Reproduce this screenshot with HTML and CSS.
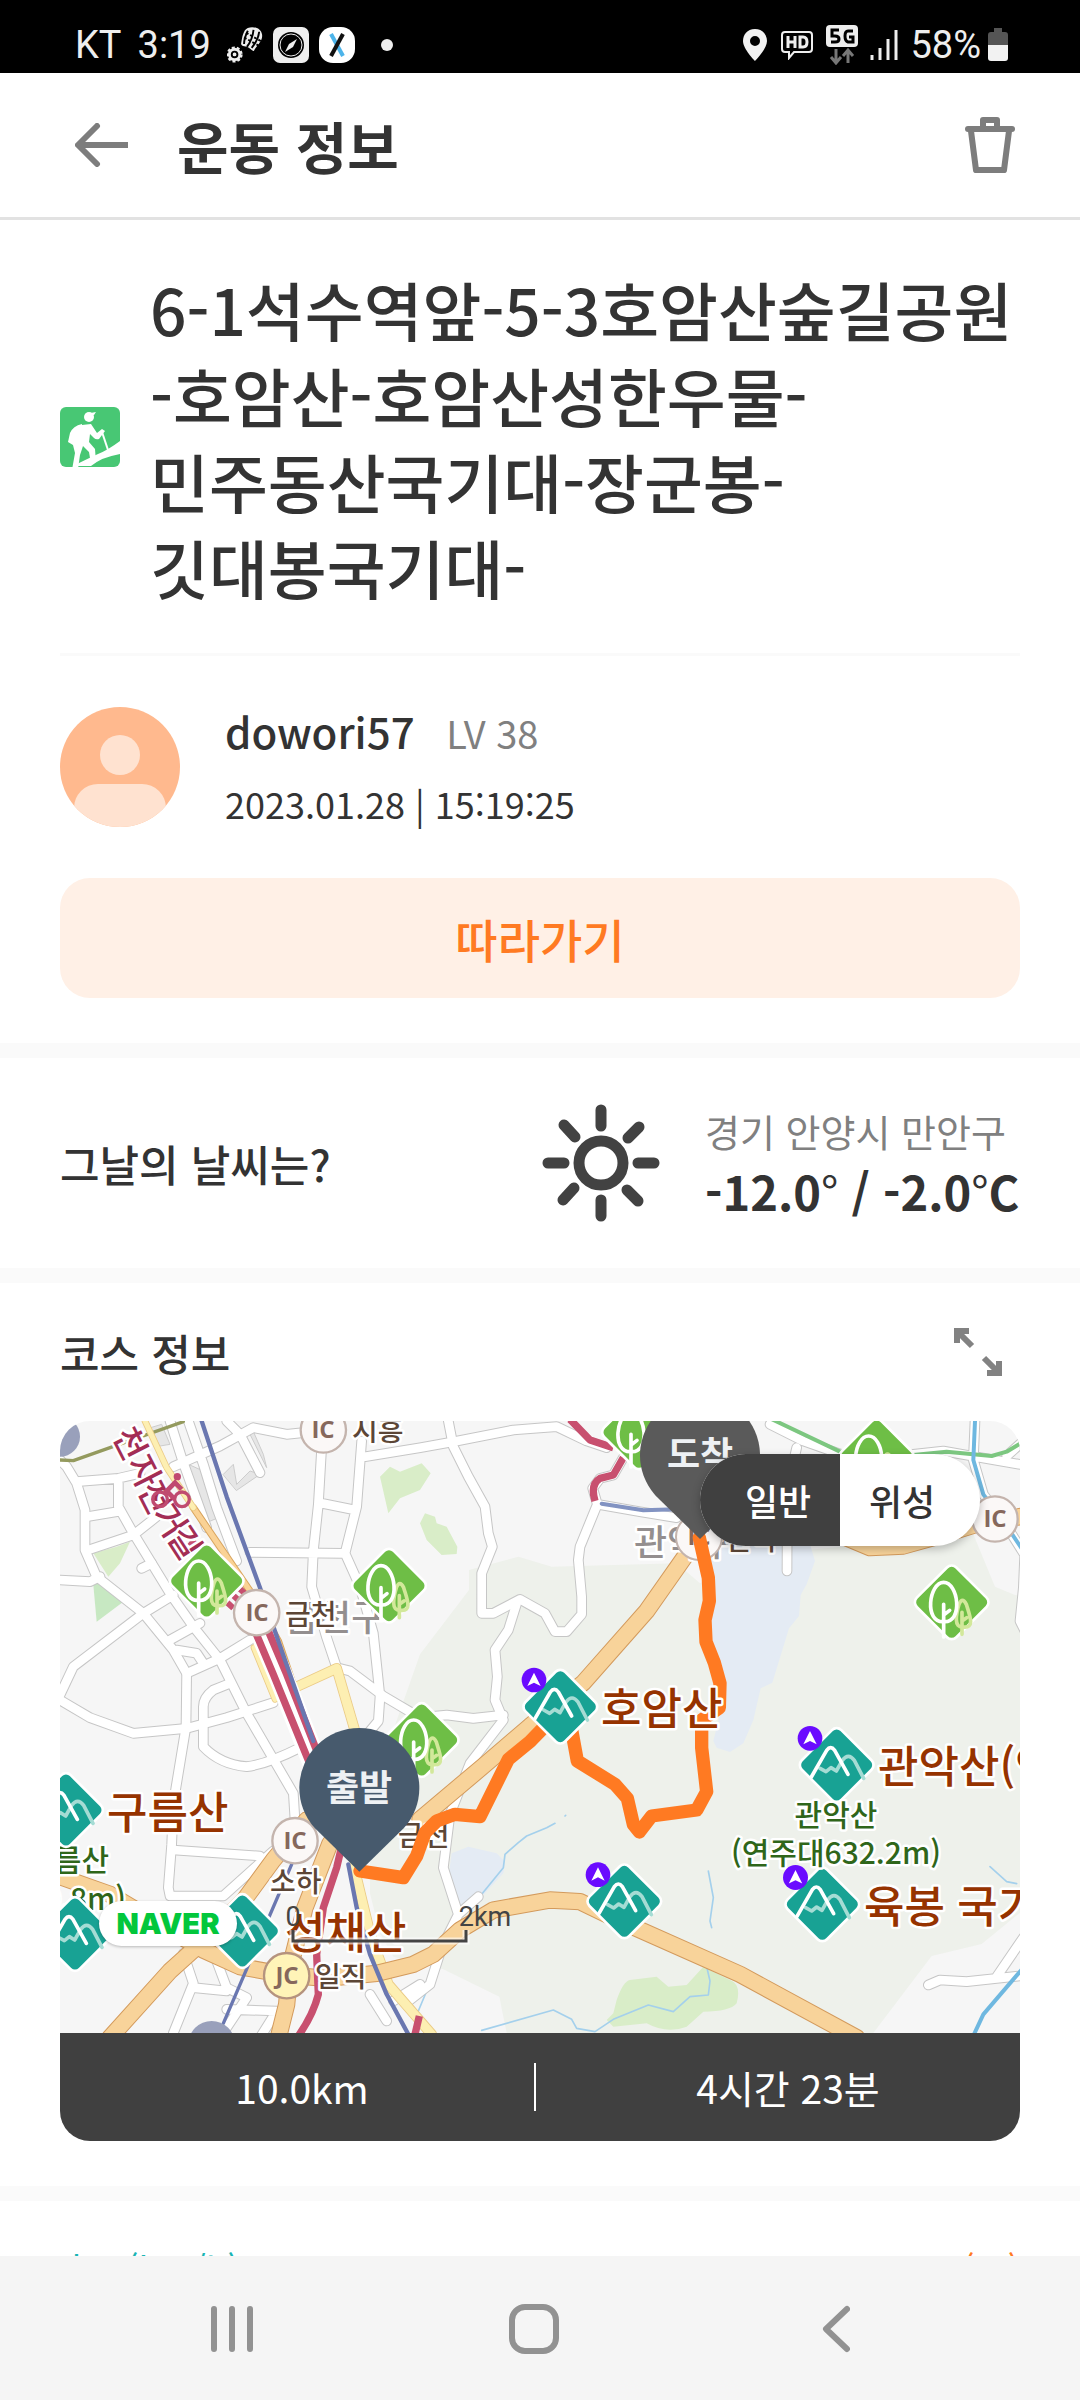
FILE: index.html
```html
<!DOCTYPE html>
<html lang="ko">
<head>
<meta charset="utf-8">
<meta name="viewport" content="width=device-width, initial-scale=1">
<title>운동 정보</title>
<link rel="stylesheet" href="styles.css">
</head>
<body>
<div class="statusbar">
  <div class="status-left">
    <span>KT</span>
    <span class="clock">3:19</span>
    <svg class="st-foot" width="36" height="36" viewBox="0 0 38 38"><g fill="#eee"><path d="M22 1c6-2 14 0 15 7 1 6-4 10-8 16-1 3-3 0-6-2-2-2-9-1-8-5 1-6 2-14 7-16z"/><circle cx="8" cy="29" r="7"/></g><g stroke="#000" stroke-width="2" fill="none"><path d="M22 4q-4 8-4 14M28 3q-1 10-7 18M34 5q-1 9-8 17"/><path stroke-dasharray="3 2" d="M18 11l16 9M20 6l16 9"/><circle cx="8" cy="29" r="3"/></g><circle cx="8" cy="29" r="7" fill="none" stroke="#eee" stroke-width="3" stroke-dasharray="3 2"/></svg>
    <svg class="st-compass" width="36" height="36" viewBox="0 0 36 36"><rect width="36" height="36" rx="7" fill="#eee"/><circle cx="18" cy="18" r="13" fill="#000"/><circle cx="18" cy="18" r="11" fill="none" stroke="#eee"/><path fill="#eee" d="M24 12l-4 8-8 5 4-8z"/></svg>
    <svg class="st-x" width="36" height="36" viewBox="0 0 36 36"><rect width="36" height="36" rx="14" fill="#fff"/><path d="M12 7l12 22" stroke="#4db4ea" stroke-width="4"/><path d="M24 7L12 29" stroke="#111" stroke-width="4"/></svg>
    <i class="dot"></i>
  </div>
  <div class="status-right">
    <svg width="26" height="32" viewBox="0 0 26 32"><path fill="#f2f2f2" fill-rule="evenodd" d="M13 0C5 0 1 6 1 12c0 8 12 20 12 20s12-12 12-20C25 6 21 0 13 0zm0 7a5 5 0 1 1 0 10 5 5 0 0 1 0-10z"/></svg>
    <svg width="34" height="30" viewBox="0 0 34 30" fill="none" stroke="#eee"><path stroke-width="2" d="M5 2h24q3 0 3 3v14q0 3-3 3H14l-5 6v-6H5q-3 0-3-3V5q0-3 3-3z"/><path stroke-width="3" d="M8 6v12M15 6v12M8 12h7M20 7v10h3q4 0 4-5t-4-5z"/></svg>
    <svg width="32" height="40" viewBox="0 0 32 40"><rect width="32" height="22" rx="4" fill="#eee"/><path fill="none" stroke="#000" stroke-width="3" d="M13 5H6v6h3q4 0 4 3t-4 3H5M27 6h-5q-3 0-3 5t3 6h5v-5h-4"/><path fill="none" stroke="#777" stroke-width="3" d="M10 24v13M5 32l5 6 5-6M22 38V25M17 31l5-6 5 6"/></svg>
    <svg width="28" height="32" viewBox="0 0 28 32" stroke="#eee" stroke-width="3"><path d="M2 26v5M10 19v12M18 10v21M26 1v30"/></svg>
    <span class="percent">58%</span>
    <svg class="st-batt" width="22" height="34" viewBox="0 0 22 34"><path fill="#555" d="M7 0h8v4h3q3 0 3 3v11H1V7q0-3 3-3h3z"/><path fill="#f2f2f2" d="M1 17h20v13q0 3-3 3H4q-3 0-3-3z"/></svg>
  </div>
</div>

<header class="appbar">
  <button class="icon-btn" aria-label="뒤로"><svg width="54" height="44" viewBox="0 0 54 44" fill="none" stroke="#7d7d7d" stroke-width="6" stroke-linecap="round" stroke-linejoin="round"><path d="M22 3L3 22l19 19"/><path stroke-linecap="butt" d="M4 22h49"/></svg></button>
  <h1>운동 정보</h1>
  <button class="icon-btn" aria-label="삭제"><svg width="52" height="58" viewBox="0 0 52 58" fill="none" stroke="#7d7d7d" stroke-width="6"><path stroke-linecap="round" d="M4 13h44"/><path stroke-linejoin="round" d="M19 11V4h14v7M7 15l5 39h28l5-39"/></svg></button>
</header>

<main class="content">
  <section class="activity">
    <div class="activity-title">
      <svg class="hike" width="60" height="60" viewBox="0 0 60 60"><rect width="60" height="60" rx="6" fill="#48c774"/><g fill="#fff"><circle cx="29" cy="10" r="5"/><path d="M25 7l11-2-2 3z"/><path d="M22 18l9-1 6 9 5-4 3 2-6 8q-3 1-5-1l-4-4-1 8 6 7 1 13-5 2-2-12-6-6-3 9-2 14-6 1 3-17-2-8-5-3 2-9q3-7 12-9z"/><path d="M13 59q14-7 25-12 10-4 22-13v13q-18 3-29 12z"/></g><path d="M42 25l7 21" stroke="#fff" stroke-width="2"/></svg>
      <h2><span>6-1석수역앞-5-3호암산숲길공원</span><span>-호암산-호암산성한우물-</span><span>민주동산국기대-장군봉-</span><span>깃대봉국기대-</span></h2>
    </div>
    <div class="profile">
      <svg width="120" height="120" viewBox="0 0 120 120"><defs><clipPath id="av"><circle cx="60" cy="60" r="60"/></clipPath></defs><g clip-path="url(#av)"><path fill="#ffb98e" d="M0 0h120v120H0z"/><g fill="#ffe2d0"><circle cx="60" cy="48" r="20"/><rect x="14" y="77" width="92" height="60" rx="24"/></g></g></svg>
      <div class="who">
        <p class="name">dowori57 <span class="level">LV 38</span></p>
        <p class="date">2023.01.28 | 15:19:25</p>
      </div>
    </div>
    <button class="follow">따라가기</button>
  </section>

  <section class="weather">
    <h3>그날의 날씨는?</h3>
    <svg width="118" height="118" viewBox="0 0 118 118" fill="none" stroke="#424242" stroke-width="11" stroke-linecap="round"><circle cx="59" cy="59" r="22"/><path d="M59 6v16M59 96v16M6 59h16M96 59h16M22 21l11 12M97 23L86 34M21 96l11-12M96 97L85 86"/></svg>
    <div class="weather-data">
      <p class="place">경기 안양시 만안구</p>
      <p class="temp">-12.0<span class="deg">°</span> / -2.0<span class="deg">°</span>C</p>
    </div>
  </section>

  <section class="course">
    <div class="course-head">
      <h3>코스 정보</h3>
      <button class="icon-btn" aria-label="지도 확대"><svg width="50" height="50" viewBox="0 0 50 50" fill="none" stroke="#828282" stroke-width="6"><path d="M19 19L4 4M4 16V4h12M31 31l15 15M46 34v12H34"/></svg></button>
    </div>
    <div class="card">
      <div class="map">
        <svg class="map-canvas" viewBox="0 0 960 612" role="img" aria-label="코스 지도">
          <defs>
            <symbol id="tree" viewBox="-120 -120 240 240" overflow="visible"><rect x="-84" y="-84" width="168" height="168" rx="20" transform="rotate(45)" fill="#6ebe46" stroke="#fff" stroke-width="8"/><g fill="none" stroke-width="11" stroke-linecap="round"><path stroke="#d2e89a" d="M36 74C4 78 14 34 22 6q10-24 22 0c8 28 28 72-8 68M31 30v66M31 56l14-10"/><path stroke="#fff" fill="#6ebe46" d="M-24 58C-84 62-68-60-24-60S36 62-24 58z"/><path stroke="#fff" d="M-24 6v98M-24 38l18-14"/></g></symbol>
            <symbol id="mount" viewBox="-120 -120 240 240" overflow="visible"><rect x="-84" y="-84" width="168" height="168" rx="20" transform="rotate(45)" fill="#18a294" stroke="#fff" stroke-width="8"/><g fill="none" stroke-width="11" stroke-linecap="round" stroke-linejoin="round"><path stroke="#a5dcd4" d="M-50 10l18 10 15-12 16 10 18-32q18-24 36 0l28 54"/><path stroke="#fff" d="M-76 36l46-80q12-16 24 0L34 28"/></g></symbol>
            <symbol id="nav" viewBox="-40 -40 80 80" overflow="visible"><circle r="37" fill="#6a0bff"/><path fill="#fff" d="M0-22l20 40L0 8l-20 10z"/></symbol>
            <g id="roads" fill="none">
              <path d="M0 117L20 137 50 187 75 267V387L110 467 250 577 340 687 380 757 378 917 340 1147 335 1270 325 1400 330 1425H490L640 1290"/>
              <path d="M50 182L175 172 240 157M175 187V257L220 337 330 517 400 617 480 717 560 877 620 980 700 1117 705 1197M80 287L170 272M85 387L220 342 290 287M0 477L90 482 120 467M0 822L40 737 250 577 340 522M330 657L420 607M380 757L480 712 570 657"/>
              <path d="M0 837L90 890 220 937 380 922 500 890 640 845M510 787L460 807Q430 830 430 857V977Q480 1030 560 1037 620 1030 720 980M350 687L410 697 430 727M245 442L275 427"/>
              <path d="M330 0L368 120 440 320M385 0L430 130 470 260 530 420M340 137L480 75 580 20 680 40 730 35M540 40L600 155M500 0L540 40"/>
              <path d="M785 80L775 250 760 390 755 497 800 650 830 740 870 750 970 825 1080 890 1160 882 1240 892 1330 882M905 60L890 257 855 397 900 497 940 637 960 827 955 900 930 930M785 247L885 267M570 394L850 397M915 107L1080 80 1180 62 1360 27 1490 17 1580 60 1640 80"/>
              <path d="M1165 0L1180 77 1225 167 1275 257 1285 337 1297 377 1265 457V577H1300L1380 535 1455 577 1485 632H1520L1565 580V527L1555 417 1560 377 1612 250 1740 272 1850 290M1612 250L1598 202 1620 172 1660 162 1690 110"/>
              <path d="M1370 547L1345 627 1305 687 1312 767 1305 837 1330 897 1230 1027 1170 1180 1150 1340 1195 1480 1145 1580 1110 1690 1040 1745M1195 1480L1255 1427"/>
              <path d="M340 1287L600 1305M370 1597L400 1687 340 1836M400 1700L500 1710M470 1620L500 1700 560 1730 480 1850M500 1765L650 1770 600 1850M930 1720L980 1800M1000 1740L1080 1690"/>
              <path d="M2130 10L2230 60 2400 120M2210 80L2182 200 2181 450M2560 100L2650 90 2790 115 2890 132M2840 105L2890 60M2745 0L2740 117 2770 220 2830 300 2890 395M2895 380L2890 500 2880 600 2900 640M2605 1692L2640 1677 2720 1682 2880 1665M2810 1667L2890 1550"/>
            </g>
            <g id="highways" fill="none">
              <path d="M1890 385L1760 570 1570 785 1410 915 1270 1035 1080 1195"/>
              <path d="M740 1197L640 1317 550 1440 400 1587 330 1650 150 1850M810 1267L735 1460 690 1640 680 1750 655 1850"/>
              <path d="M0 1367L150 1420 430 1587 540 1637 680 1662 800 1672 950 1657 1060 1630 1120 1600 1200 1527 1300 1467 1470 1437 1560 1442 1680 1500 2040 1660 2390 1850M2310 330L2430 380 2530 375 2620 350 2750 310 2890 285"/>
            </g>
          </defs>
          <rect width="960" height="612" fill="#f6f6f6"/>
          <g transform="scale(0.333333)" stroke-linecap="round" stroke-linejoin="round">
            <path fill="#eef1eb" d="M1227 447L1375 407 1475 437 1850 427 1920 487 2100 400 2740 340 2805 497 2865 522 2890 525V1467L2765 1569 2615 1605 2440 1836H1340L1318 1727 1150 1645 1000 1607 960 1537 930 1417V1250L1000 927 1080 700 1227 507z"/>
            <path fill="#e4ebf4" d="M1935 430L1960 370H2250L2265 420 2240 490 2222 522 2217 585 2187 622 2137 785 2102 802 2080 897 2050 967 2010 993 1970 980 1960 960 1975 900 1990 830 1940 640zM1175 1297L1225 1277 1310 1297 1335 1322 1330 1357 1265 1427 1200 1467 1165 1370z"/>
            <path fill="#d9edc8" d="M960 167L990 137 1020 152 1085 127 1112 157 1080 207 1020 232 985 277zM1080 307L1095 277 1125 287 1130 307 1160 317 1192 377 1190 399 1145 402 1100 357zM100 397L170 377 210 362 180 427 145 467zM1640 1797L1660 1777 1670 1737Q1690 1680 1710 1677L1790 1667 1825 1697 1880 1692 1930 1637 2010 1677Q2045 1690 2030 1747 2010 1772 1930 1772L1880 1817Q1820 1840 1760 1807L1660 1817z"/>
            <path fill="#c7e8c2" d="M100 492L130 482 190 542 110 602z"/>
            <path fill="#e6e6e6" stroke="#ccc" stroke-width="3" d="M272 20L305 10 330 70 300 75zM385 130L430 150 475 290 440 305zM490 160L520 130 530 190 570 150 600 160 530 208zM560 20L620 140 610 100 575 20z"/>
            <g fill="none" stroke="#a4d0ec" stroke-width="5"><path d="M1265 1420L1330 1340 1335 1300 1375 1265 1400 1245 1460 1220 1485 1207M1515 1185l2-2M1265 1828L1480 1767 1535 1795 1550 1822 1605 1832 1660 1795 1765 1752 1840 1772 1890 1727 1945 1722 1950 1680 1940 1637M1945 1350L1960 1430 1950 1500 1955 1520M2790 1337L2840 1382 2870 1388M1075 1770L1100 1710"/></g>
            <use href="#roads" stroke="#c6c6c6" stroke-width="32"/>
            <use href="#roads" stroke="#fff" stroke-width="26"/>
            <path fill="none" stroke="#949a5e" stroke-width="10" d="M0 117L40 119 370 2"/>
            <g fill="none"><path stroke="#d9a55e" stroke-width="22" d="M400 260L570 510 655 660 750 940"/><path stroke="#fad295" stroke-width="16" d="M400 260L570 510 655 660 750 940"/>
            <g stroke="#ebcb86" stroke-width="32"><path d="M715 795L830 742 885 930V1350L930 1537 985 1690 1115 1840"/><path stroke-width="20" d="M255 0L320 140 400 260M582 680L645 835"/></g><g stroke="#fdefb2" stroke-width="27"><path d="M715 795L830 742 885 930V1350L930 1537 985 1690 1115 1840"/><path stroke-width="15" d="M255 0L320 140 400 260M582 680L645 835"/></g></g>
            <use href="#highways" stroke="#d39a5c" stroke-width="52"/>
            <use href="#highways" stroke="#f8d39a" stroke-width="46"/>
            <g fill="none">
              <path stroke="#fff" stroke-width="74" d="M605 630L660 760 770 1040"/>
              <path stroke="#c8506f" stroke-width="22" stroke-linecap="butt" d="M585 630L640 760 750 1030M625 630L680 760 790 1040M843 1285L830 1340 790 1460 770 1600 775 1720Q760 1780 715 1845M1530 -5L1590 57 1660 80M1690 110L1660 162 1620 172Q1590 190 1605 240M1065 1840L1078 1785"/>
              <path stroke="#c8506f" stroke-width="24" stroke-linecap="butt" stroke-dasharray="18 10" d="M390 360L440 400M505 560L560 500"/>
              <path stroke="#6a77b0" stroke-width="13" d="M425 0L500 227 600 500 655 660 760 960M865 1330L890 1460 930 1600 980 1720 1045 1840"/>
              <path stroke="#6a77b0" stroke-width="10" d="M695 1330L490 1807"/>
              <path stroke="#8293c2" stroke-width="12" d="M1625 248L1750 268 1850 265"/>
              <path stroke="#7cc780" stroke-width="12" d="M2130 -8L2340 92 2560 102 2660 92 2795 105 2840 92 2890 62"/>
              <path stroke="#6fb8e0" stroke-width="12" d="M2745 0L2740 117 2770 220 2830 300 2890 390M2742 1840L2770 1780 2890 1640"/>
            </g>
            <circle cx="0" cy="47" r="60" fill="#99a0bb"/><circle cx="455" cy="1870" r="70" fill="#99a0bb"/>
            <g fill="#fbf8f7" stroke="#c4b4ad" stroke-width="7"><circle cx="790" cy="27" r="68"/><circle cx="590" cy="575" r="68"/><circle cx="705" cy="1259" r="68"/><circle cx="2805" cy="294" r="68"/><circle cx="680" cy="1664" r="68" fill="#fff4b8" stroke="#b5937e"/></g>
          </g>
          <g class="map-text">
            <g class="ghost"><text x="225" y="210">금천구</text><text x="574" y="135">관악구</text></g>
          </g>
          <circle cx="639" cy="116" r="23" fill="#fbf8f7" stroke="#c4b4ad" stroke-width="2"/>
          <g class="map-text">
            <text x="292" y="20" class="road">시흥</text>
            <text x="225" y="204" class="road">금천</text>
            <text x="338" y="425" class="road">금천</text>
            <text x="210" y="471" class="road">소하</text>
            <text x="255" y="566" class="road">일직</text>
            <text x="666" y="129" class="road">관악</text>
            <g class="bike"><text transform="translate(52 14) rotate(63)">천</text><text transform="translate(66 42) rotate(63)">자</text><text transform="translate(77 68) rotate(63)">전</text><text transform="translate(91 93) rotate(57)">거</text><text transform="translate(106 115) rotate(57)">길</text></g>
            <g class="icl"><text x="263" y="17">IC</text><text x="197" y="200">IC</text><text x="235" y="428">IC</text><text x="639" y="124">IC</text><text x="935" y="106">IC</text><text x="227" y="563">JC</text></g>
            <g class="green"><text x="49" y="450" text-anchor="end">구름산</text><text x="66" y="489" text-anchor="end">(240.8m)</text></g>
          </g>
          <g transform="scale(0.333333)"><g fill="none" stroke="#c04a70" stroke-width="10"><circle cx="300" cy="235" r="22"/><circle cx="366" cy="235" r="22"/><path stroke-width="14" d="M345 235L320 210 345 185 365 205"/></g><circle cx="352" cy="167" r="11" fill="#c04a70"/></g>
          <path transform="scale(0.333333)" fill="none" stroke="#ff7a22" stroke-width="40" stroke-linejoin="round" stroke-linecap="round" d="M900 1350L1030 1370 1070 1305 1095 1235 1130 1200 1185 1180 1260 1187 1345 1015 1410 962 1470 900 1530 900 1552 1020 1665 1090 1702 1132 1720 1210 1738 1233 1775 1185 1910 1167 1940 1112 1925 980V897L1978 860 1980 787 1963 725 1938 662 1935 597 1948 540 1945 470 1918 350"/>
          <g transform="scale(0.333333)">
            <g id="trees"><use href="#tree" x="320" y="360" width="240" height="240"/><use href="#tree" x="867" y="374" width="240" height="240"/><use href="#tree" x="965" y="837" width="240" height="240"/><use href="#tree" x="1617" y="-86" width="240" height="240"/><use href="#tree" x="2330" y="-15" width="240" height="240"/><use href="#tree" x="2555" y="424" width="240" height="240"/></g>
            <g id="mountains"><use href="#mount" x="-102" y="1047" width="240" height="240"/><use href="#mount" x="-75" y="1419" width="240" height="240"/><use href="#mount" x="427" y="1410" width="240" height="240"/><use href="#mount" x="1381" y="737" width="240" height="240"/><use href="#mount" x="1573" y="1321" width="240" height="240"/><use href="#mount" x="2210" y="912" width="240" height="240"/><use href="#mount" x="2167" y="1330" width="240" height="240"/></g>
            <g><use href="#nav" x="1382" y="737" width="80" height="80"/><use href="#nav" x="1574" y="1321" width="80" height="80"/><use href="#nav" x="2210" y="912" width="80" height="80"/></g>
          </g>
          <g class="map-text">
            <g class="green"><text x="776" y="405" text-anchor="middle">관악산</text><text x="776" y="443" text-anchor="middle">(연주대632.2m)</text></g>
            <g class="peak"><text x="47" y="408">구름산</text><text x="541" y="304">호암산</text><text x="818" y="362">관악산(연주대)</text><text x="804" y="502">육봉 국기봉</text><text x="225" y="528">성채산</text></g>
          </g>
          <use href="#nav" x="722" y="443" width="27" height="27"/>
          <g transform="scale(0.333333)">
            <path fill="#475a6d" d="M898 1352L765 1222A180 180 0 1 1 1031 1222z"/>
            <path fill="#5a5a5a" d="M1920 354L1787 224A180 180 0 1 1 2053 224z"/>
          </g>
          <g class="pins"><text x="299" y="380">출발</text><text x="640" y="47">도착</text></g>
          <path d="M233 509v11h173v-11" fill="none" stroke="#fff" stroke-width="7" opacity=".6"/>
          <path d="M233 509v11h173v-11" fill="none" stroke="#444" stroke-width="3"/>
          <g class="scale"><text x="233" y="505" text-anchor="middle">0</text><text x="425" y="505" text-anchor="middle">2km</text></g>
        </svg>
        <span class="naver">NAVER</span>
        <div class="toggle"><button class="on">일반</button><button>위성</button></div>
      </div>
      <dl class="stats"><dd>10.0km</dd><dd>4시간 23분</dd></dl>
    </div>
  </section>

  <section class="chart">
    <span class="speed">속도(km/h)</span><span class="alt">고도(m)</span>
  </section>
</main>

<nav class="navbar">
  <button aria-label="최근 앱"><svg width="44" height="48" viewBox="0 0 44 48" stroke="#929292" stroke-width="6" stroke-linecap="round"><path d="M4 4v40M22 4v40M40 4v40"/></svg></button>
  <button aria-label="홈"><svg width="50" height="50" viewBox="0 0 50 50"><rect x="3" y="3" width="44" height="44" rx="13" fill="none" stroke="#929292" stroke-width="6"/></svg></button>
  <button aria-label="뒤로 가기"><svg width="28" height="48" viewBox="0 0 28 48" fill="none" stroke="#929292" stroke-width="6" stroke-linecap="round" stroke-linejoin="round"><path d="M25 4L4 24l21 20"/></svg></button>
</nav>
</body>
</html>
```
FILE: styles.css
```css
* { box-sizing: border-box; }
body {
  margin: 0;
  height: 100vh;
  display: flex;
  flex-direction: column;
  background: #fff;
  color: #333;
  font-family: "Noto Sans CJK KR", sans-serif;
}
h1, h2, h3, p, dl, dd { margin: 0; font-weight: 500; }
button { border: 0; padding: 0; background: none; font: inherit; color: inherit; }
svg { display: block; flex: none; }

.statusbar {
  flex: none;
  height: 73px;
  padding: 16px 71px 0 75px;
  display: flex;
  justify-content: space-between;
  background: #000;
  color: #eee;
  font: 38px/58px Roboto, sans-serif;
}
.status-left, .status-right { display: flex; align-items: center; }
.status-left { gap: 10px; }
.clock { margin-left: 6px; margin-right: 6px; }
.dot { width: 12px; height: 12px; margin-left: 16px; border-radius: 50%; background: #eee; }
.status-right { gap: 12px; }
.st-batt { margin-left: -6px; }

.appbar {
  flex: none;
  height: 147px;
  padding: 0 64px 0 75px;
  display: flex;
  align-items: center;
  border-bottom: 3px solid #e2e2e2;
}
.appbar h1 { flex: 1; margin-left: 48px; font-size: 56px; font-weight: 700; line-height: 76px; }

.content { flex: 1; min-height: 0; overflow-y: auto; scrollbar-width: none; }
.content section { padding: 45px 60px; border-bottom: 15px solid #fafafa; }

.activity-title {
  display: flex;
  align-items: center;
  gap: 30px;
  padding-bottom: 44px;
  border-bottom: 3px solid #fafafa;
}
.activity-title h2 { font-size: 64px; line-height: 86px; white-space: nowrap; }
.activity-title span { display: block; }

.profile { display: flex; align-items: center; gap: 45px; padding: 40px 0; }
.name { font-size: 42px; line-height: 70px; }
.level { margin-left: 20px; font-size: 38px; font-weight: 400; color: #808080; }
.date { font-size: 36px; font-weight: 400; line-height: 70px; }
.follow {
  display: block;
  width: 100%;
  height: 120px;
  border-radius: 30px;
  background: #fff0e6;
  color: #ff7a22;
  font-size: 46px;
  font-weight: 500;
}

h3 { font-size: 43px; line-height: 60px; }
.content .weather { display: flex; align-items: center; height: 225px; padding-top: 0; padding-bottom: 0; }
.weather h3 { flex: 1; }
.weather-data { width: 315px; margin-left: 45px; white-space: nowrap; }
.place { font-size: 38px; font-weight: 400; line-height: 56px; color: #808080; }
.temp { font-size: 47px; line-height: 64px; font-weight: 700; }
.deg { font-weight: 400; }

.course-head { display: flex; justify-content: space-between; align-items: center; height: 48px; margin: 0 17px 45px 0; }
.card { overflow: hidden; border-radius: 30px; }
.map { position: relative; }
.map-canvas { width: 100%; height: auto; }
.map-text text { paint-order: stroke; stroke: #fff; stroke-width: 5px; stroke-linejoin: round; }
.map-text, .pins { font-family: "Noto Sans CJK KR", sans-serif; font-weight: 500; }
.road { font-size: 28px; fill: #5c4636; }
.ghost { font-size: 36px; fill: #948f8f; }
.bike { font-size: 34px; fill: #a32d55; }
.map-text .icl { font-family: "Open Sans", sans-serif; font-size: 24px; font-weight: 700; fill: #86685c; text-anchor: middle; }
.map-text .icl text { stroke: none; }
.green { font-size: 30px; fill: #2f661a; }
.peak { font-size: 44px; fill: #963300; }
.pins { font-size: 36px; fill: #eef1f4; font-weight: 700; text-anchor: middle; }
.scale { font: 27px Roboto, sans-serif; fill: #444; }
.naver {
  position: absolute;
  left: 39px;
  bottom: 87px;
  width: 138px;
  height: 45px;
  border-radius: 23px;
  background: #fff;
  box-shadow: 0 1px 3px rgba(0, 0, 0, .25);
  color: #03c73c;
  font: 900 29px/45px Inter, sans-serif;
  text-align: center;
}
.toggle {
  position: absolute;
  top: 33px;
  right: 40px;
  display: flex;
  width: 280px;
  height: 92px;
  overflow: hidden;
  border-radius: 46px;
  background: #fff;
  box-shadow: 0 3px 8px rgba(0, 0, 0, .25);
}
.toggle button { width: 50%; font-size: 36px; font-weight: 500; padding: 0 16px 0 0; }
.toggle .on { background: #404040; color: #fff; padding: 0 0 0 16px; }
.stats { position: relative; display: flex; align-items: center; height: 108px; background: #404040; color: #fff; font-size: 39px; }
.stats dd { flex: 1; line-height: 48px; text-align: center; font-weight: 400; }
.stats dd:first-child { padding-left: 10px; }
.stats dd + dd { border-left: 2px solid #fff; padding-left: 20px; }

.content .chart { display: flex; justify-content: space-between; padding-top: 42px; padding-bottom: 80px; font-size: 36px; line-height: 50px; }
.speed { color: #18b4b4; }
.alt { color: #ff7a22; }

.navbar { flex: none; height: 144px; display: flex; padding: 2px 93px 0 81px; background: #f5f5f5; }
.navbar button { flex: 1; display: flex; align-items: center; justify-content: center; }
```
